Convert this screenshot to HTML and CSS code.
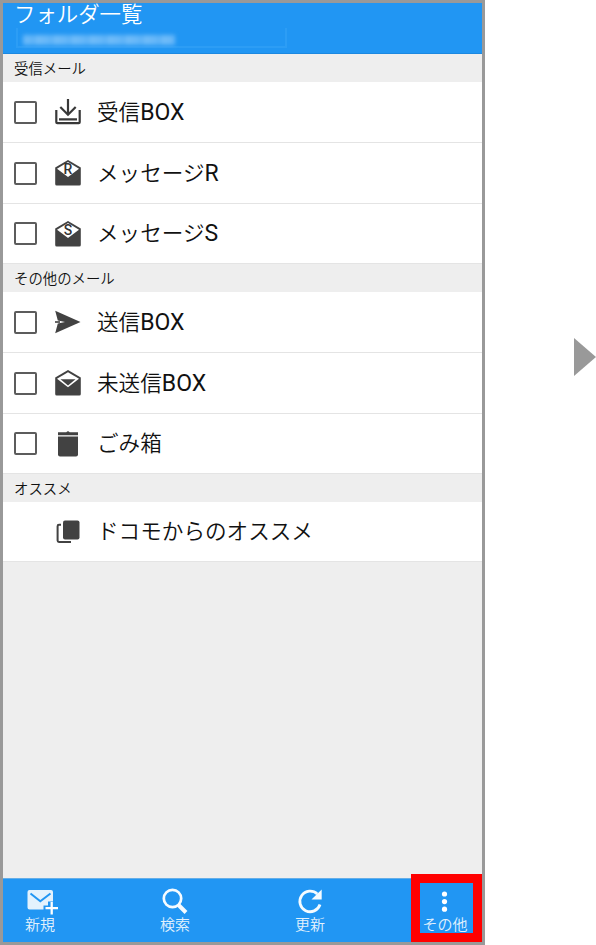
FILE: index.html
```
<!DOCTYPE html>
<html lang="ja">
<head>
    <meta charset="UTF-8">
    <meta name="viewport" content="width=device-width, initial-scale=1.0">
    <title>フォルダ一覧</title>
    <link rel="stylesheet" href="styles.css">
</head>
<body>
    <div class="phone">
        <!-- Header -->
        <header>
            <h1>フォルダ一覧</h1>
            <div class="address"><span class="address-mask"></span></div>
        </header>

        <!-- Folder list -->
        <main>
            <h2>受信メール</h2>
            <ul>
                <li>
                    <span class="checkbox"></span>
                    <svg class="icon" viewBox="0 0 28 28" fill="none" stroke="#383838" stroke-width="2.200">
                        <path d="M14 1V16.500M6.300 9L14 16.700L21.700 9"/>
                        <path d="M2.300 12V24.200Q2.300 25.200 3.300 25.200H24.700Q25.700 25.200 25.700 24.200V12M5 21.300H23"/>
                    </svg>
                    <span class="name">受信<span class="latin">BOX</span></span>
                </li>
                <li>
                    <span class="checkbox"></span>
                    <svg class="icon" viewBox="0 0 28 28">
                        <path d="M14 1L26.800 8.500V25Q26.800 26.500 25.300 26.500H2.700Q1.200 26.500 1.200 25V8.500Z" fill="#424242"/>
                        <path d="M14 3L25 9.700L14 18L3 9.700Z" fill="#fff"/>
                        <text x="14" y="15" class="letter">R</text>
                    </svg>
                    <span class="name">メッセージ<span class="latin">R</span></span>
                </li>
                <li>
                    <span class="checkbox"></span>
                    <svg class="icon" viewBox="0 0 28 28">
                        <path d="M14 1L26.800 8.500V25Q26.800 26.500 25.300 26.500H2.700Q1.200 26.500 1.200 25V8.500Z" fill="#424242"/>
                        <path d="M14 3L25 9.700L14 18L3 9.700Z" fill="#fff"/>
                        <text x="14" y="15" class="letter">S</text>
                    </svg>
                    <span class="name">メッセージ<span class="latin">S</span></span>
                </li>
            </ul>

            <h2>その他のメール</h2>
            <ul>
                <li>
                    <span class="checkbox"></span>
                    <svg class="icon" viewBox="0 0 28 28" fill="#424242">
                        <path d="M1.200 2.800L26.500 14L1.200 25.200L3.800 15.600L11 14L3.800 12.400Z"/>
                        <path d="M1 13.200H6V14.800H1Z"/>
                    </svg>
                    <span class="name">送信<span class="latin">BOX</span></span>
                </li>
                <li>
                    <span class="checkbox"></span>
                    <svg class="icon" viewBox="0 0 28 28">
                        <path d="M14 1L26.800 8.500V25Q26.800 26.500 25.300 26.500H2.700Q1.200 26.500 1.200 25V8.500Z" fill="#424242"/>
                        <path d="M14 3.200L25 9.700L14 18.200L3 9.700Z" fill="#fff"/>
                        <path d="M6.500 10.300H21.500L14 16.400Z" fill="#424242"/>
                    </svg>
                    <span class="name">未送信<span class="latin">BOX</span></span>
                </li>
                <li>
                    <span class="checkbox"></span>
                    <svg class="icon" viewBox="0 0 28 28" fill="#424242">
                        <path d="M4 2.300H12.300Q14 0.300 15.700 2.300H24V5.200H4Z"/>
                        <path d="M4 6.500H24V24.500Q24 26.500 22 26.500H6Q4 26.500 4 24.500Z"/>
                    </svg>
                    <span class="name">ごみ箱</span>
                </li>
            </ul>

            <h2>オススメ</h2>
            <ul>
                <li>
                    <span class="checkbox hidden"></span>
                    <svg class="icon" viewBox="0 0 28 28">
                        <rect x="9" y="2.500" width="16.500" height="19" rx="2" fill="#424242"/>
                        <path d="M7 6.800H5Q3.600 6.800 3.600 8.200V22.600Q3.600 24 5 24H17" fill="none" stroke="#424242" stroke-width="2"/>
                    </svg>
                    <span class="name">ドコモからのオススメ</span>
                </li>
            </ul>
        </main>

        <!-- Toolbar -->
        <footer>
            <div class="tool">
                <svg viewBox="0 0 34 28">
                    <path d="M6.500 2H28Q30 2 30 4V13.500H25V17.500H20.500V21.500H6.500Q4.500 21.500 4.500 19.500V4Q4.500 2 6.500 2Z" fill="#e3f2fd"/>
                    <path d="M7.500 5.500L17.300 13.200L27.500 5.500" fill="none" stroke="#2196f3" stroke-width="2"/>
                    <path d="M28.700 14V26.500M22.500 20.200H35" fill="none" stroke="#fff" stroke-width="2.300"/>
                </svg>
                <span>新規</span>
            </div>
            <div class="tool">
                <svg viewBox="0 0 34 28" fill="none" stroke="#f5fbff">
                    <circle cx="14.500" cy="10.500" r="8.700" stroke-width="2.700"/>
                    <path d="M20.500 17L28 24.500" stroke-width="4"/>
                </svg>
                <span>検索</span>
            </div>
            <div class="tool">
                <svg viewBox="0 0 34 28">
                    <path d="M24.300 6A10.300 10.300 0 1 0 27 16.500" fill="none" stroke="#f5fbff" stroke-width="2.800"/>
                    <path d="M28.700 1.500V11.500H18.500Z" fill="#f5fbff"/>
                </svg>
                <span>更新</span>
            </div>
            <div class="tool">
                <svg viewBox="0 0 34 28" fill="#fff">
                    <circle cx="16.500" cy="6" r="2.600"/>
                    <circle cx="16.500" cy="13.600" r="2.600"/>
                    <circle cx="16.500" cy="21.200" r="2.600"/>
                </svg>
                <span>その他</span>
            </div>
        </footer>
        <div class="highlight"></div>
    </div>

    <svg class="next" viewBox="0 0 22 38"><path d="M0 0L22 19L0 38Z" fill="#999"/></svg>
</body>
</html>
```
FILE: styles.css
```
* {
    box-sizing: border-box;
}

body {
    margin: 0;
    height: 945px;
    display: flex;
    justify-content: space-between;
    background: #fff;
    color: #111;
    font-family: Roboto, "Noto Sans CJK JP", sans-serif;
    font-weight: 350;
    overflow: hidden;
}

.phone {
    position: relative;
    display: flex;
    flex-direction: column;
    width: 485px;
    height: 945px;
    border: 3px solid #999;
    background: #eee;
    overflow: hidden;
}

/* Header */
header {
    height: 51px;
    padding-left: 11px;
    background: #2196f3;
    border-bottom: 1px solid #1c88e0;
    color: #fff;
}

h1 {
    margin: 0;
    font-size: 21.4px;
    font-weight: 350;
    line-height: 24px;
    height: 25px;
}

.address {
    display: flex;
    align-items: center;
    width: 271px;
    height: 20px;
    margin-left: 2px;
    border: 2px solid #2c9df5;
    border-top: none;
}

.address-mask {
    width: 152px;
    height: 10px;
    margin: 5px 0 0 5px;
    background: repeating-linear-gradient(90deg, #69b8f8 0 7px, #5fb3f7 7px 13px, #70bbf8 13px 18px);
    filter: blur(2px);
}

/* Folder list */
main {
    flex: 1;
}

h2 {
    margin: 0;
    height: 28px;
    padding: 2px 0 0 11px;
    background: #eee;
    font-size: 14.4px;
    font-weight: 350;
    line-height: 28px;
}

ul {
    margin: 0;
    padding: 0;
    list-style: none;
}

li {
    display: flex;
    align-items: center;
    height: 61px;
    padding-left: 11px;
    background: #fff;
    border-bottom: 1px solid #e4e4e4;
}

li:last-child {
    height: 60px;
}

.checkbox {
    width: 23px;
    height: 23px;
    border: 2px solid #5c5c5c;
    border-radius: 2px;
}

.checkbox.hidden {
    visibility: hidden;
}

.icon {
    width: 28px;
    height: 28px;
    margin-left: 17px;
}

.letter {
    font-size: 14px;
    font-weight: 500;
    text-anchor: middle;
    fill: #333;
}

.name {
    margin-left: 15px;
    padding-top: 1px;
    font-size: 21.6px;
    line-height: 30px;
    white-space: nowrap;
}

.latin {
    font-size: 23px;
    font-weight: 400;
    line-height: 1;
}

/* Toolbar */
footer {
    display: grid;
    grid-template-columns: repeat(4, 135px);
    justify-content: center;
    height: 64px;
    padding-top: 9px;
    background: #2196f3;
    border-top: 1px solid #64aee8;
    color: #e3f2fd;
}

.tool {
    display: flex;
    flex-direction: column;
    align-items: center;
    font-size: 15px;
    line-height: 18px;
}

.tool svg {
    width: 34px;
    height: 28px;
    overflow: visible;
}

/* Red frame lying over the last toolbar button */
.highlight {
    position: absolute;
    right: 0;
    bottom: 0;
    width: 71px;
    height: 68px;
    border: 9px solid #f00;
}

.next {
    width: 22px;
    height: 38px;
    margin-top: 338px;
}
```
